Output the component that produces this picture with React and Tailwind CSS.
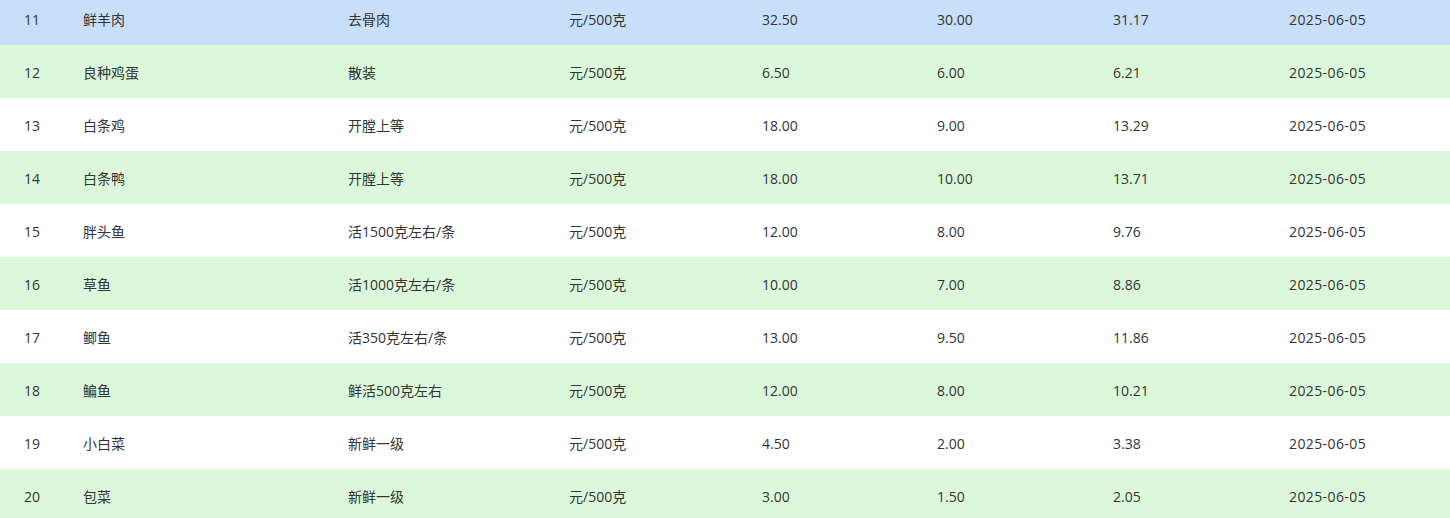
import React from "react";

const rows = [
  ["11", "鲜羊肉", "去骨肉", "元/500克", "32.50", "30.00", "31.17", "2025-06-05"],
  ["12", "良种鸡蛋", "散装", "元/500克", "6.50", "6.00", "6.21", "2025-06-05"],
  ["13", "白条鸡", "开膛上等", "元/500克", "18.00", "9.00", "13.29", "2025-06-05"],
  ["14", "白条鸭", "开膛上等", "元/500克", "18.00", "10.00", "13.71", "2025-06-05"],
  ["15", "胖头鱼", "活1500克左右/条", "元/500克", "12.00", "8.00", "9.76", "2025-06-05"],
  ["16", "草鱼", "活1000克左右/条", "元/500克", "10.00", "7.00", "8.86", "2025-06-05"],
  ["17", "鲫鱼", "活350克左右/条", "元/500克", "13.00", "9.50", "11.86", "2025-06-05"],
  ["18", "鳊鱼", "鲜活500克左右", "元/500克", "12.00", "8.00", "10.21", "2025-06-05"],
  ["19", "小白菜", "新鲜一级", "元/500克", "4.50", "2.00", "3.38", "2025-06-05"],
  ["20", "包菜", "新鲜一级", "元/500克", "3.00", "1.50", "2.05", "2025-06-05"],
];

export default function App() {
  return (
    <div
      className="w-[1450px] h-[518px] overflow-hidden bg-white text-[#333333] text-[14px]"
      style={{ fontFamily: '"Open Sans", "Noto Sans CJK SC", sans-serif' }}
    >
      <div className="-mt-[8px]">
        {rows.map((r, i) => (
          <div
            key={r[0]}
            className={
              "grid grid-cols-[83px_265px_221px_193px_175px_176px_176px_1fr] h-[53px] items-center pt-[2px] " +
              (i === 0 ? "bg-[#c8dff9]" : i % 2 === 1 ? "bg-[#dbf9da]" : "bg-white")
            }
          >
            <div className="pl-[24px]">{r[0]}</div>
            <div>{r[1]}</div>
            <div>{r[2]}</div>
            <div>{r[3]}</div>
            <div>{r[4]}</div>
            <div>{r[5]}</div>
            <div>{r[6]}</div>
            <div className="tracking-[0.4px]">{r[7]}</div>
          </div>
        ))}
      </div>
    </div>
  );
}
